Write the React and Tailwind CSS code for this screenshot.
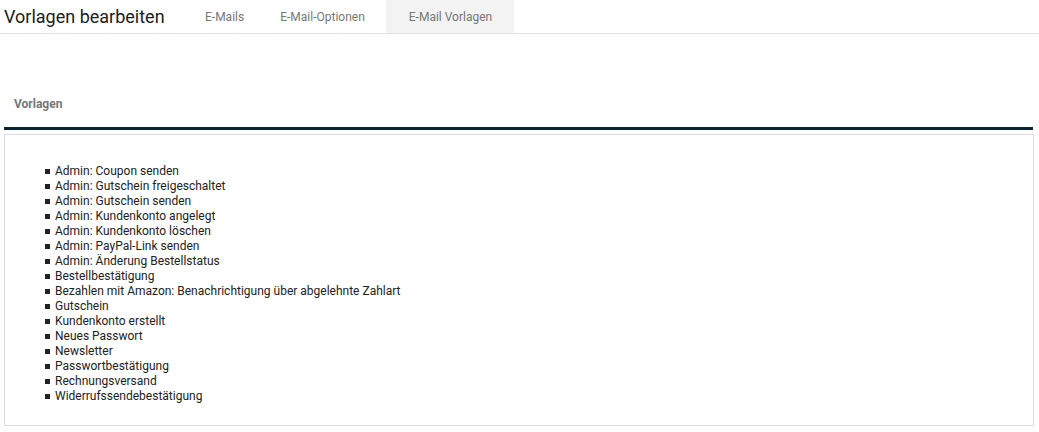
const tabs = [
  { label: "E-Mails", active: false },
  { label: "E-Mail-Optionen", active: false },
  { label: "E-Mail Vorlagen", active: true },
];

const templates = [
  "Admin: Coupon senden",
  "Admin: Gutschein freigeschaltet",
  "Admin: Gutschein senden",
  "Admin: Kundenkonto angelegt",
  "Admin: Kundenkonto löschen",
  "Admin: PayPal-Link senden",
  "Admin: Änderung Bestellstatus",
  "Bestellbestätigung",
  "Bezahlen mit Amazon: Benachrichtigung über abgelehnte Zahlart",
  "Gutschein",
  "Kundenkonto erstellt",
  "Neues Passwort",
  "Newsletter",
  "Passwortbestätigung",
  "Rechnungsversand",
  "Widerrufssendebestätigung",
];

export default function App() {
  return (
    <div className="min-h-[432px] bg-white font-['Roboto',sans-serif] text-[#222]">
      <header className="flex h-[34px] items-stretch border-b border-[#e3e3e3]">
        <h1 className="flex w-[186px] items-center pl-1 text-[18px] leading-none text-[#1c1c1c]">
          Vorlagen bearbeiten
        </h1>
        <nav className="flex items-stretch">
          {tabs.map((tab) => (
            <a
              key={tab.label}
              className={
                "flex items-center text-[12px] text-[#777] " +
                (tab.active ? "ml-[4px] bg-[#f3f3f3] pr-[22px] pl-[23px]" : "pl-[19px] pr-[17px]")
              }
            >
              {tab.label}
            </a>
          ))}
        </nav>
      </header>

      <main className="px-1 pt-[63px]">
        <h2 className="pl-[10px] text-[12px] font-bold leading-[15px] text-[#777]">Vorlagen</h2>
        <div className="mt-[15px] mr-[2px] h-[3px] bg-[#0b2235]" />
        <div className="mt-[4px] mr-[1px] border border-[#dcdcdc] pt-[29px] pb-[21px]">
          <ul className="pl-[40px] text-[12px] leading-[15px] text-[#222]">
            {templates.map((name) => (
              <li key={name} className="flex items-center">
                <span className="mr-[5px] h-[5px] w-[5px] bg-[#222]" />
                {name}
              </li>
            ))}
          </ul>
        </div>
      </main>
    </div>
  );
}
